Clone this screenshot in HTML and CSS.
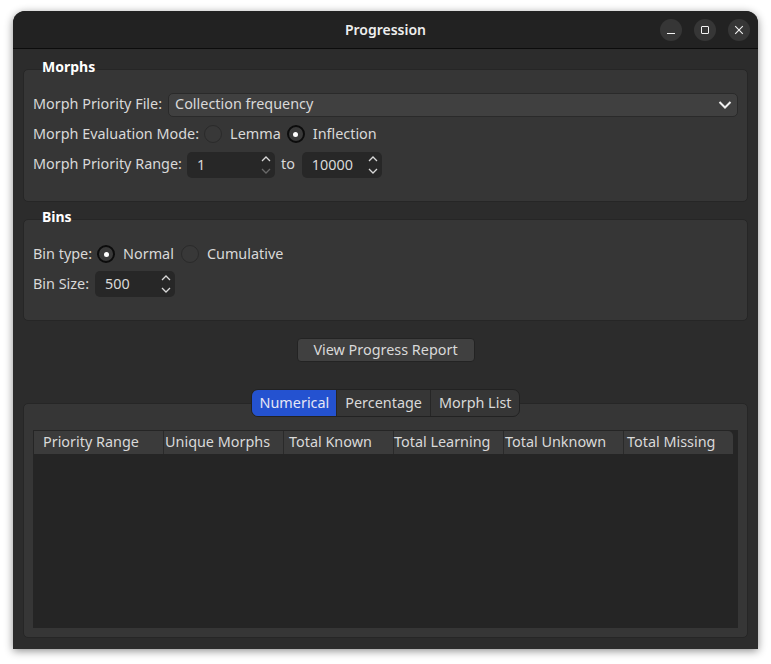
FILE: index.html
```html
<!DOCTYPE html>
<html lang="en">
<head>
    <meta charset="UTF-8" />
    <title>Progression</title>
    <link rel="stylesheet" href="styles.css">
</head>
<body>
    <div class="window">
        <header class="titlebar">
            <span class="title">Progression</span>
            <div class="win-btns">
                <span class="win-btn"><svg width="12" height="12" viewBox="0 0 12 12"><path d="M2 9.500h8" stroke="#f2f2f2" stroke-width="1" fill="none"/></svg></span>
                <span class="win-btn"><svg width="12" height="12" viewBox="0 0 12 12"><rect x="2.500" y="2.500" width="7" height="7" rx="0.500" stroke="#f2f2f2" stroke-width="1" fill="none"/></svg></span>
                <span class="win-btn"><svg width="12" height="12" viewBox="0 0 12 12"><path d="M2.200 2.200l7.600 7.600M9.800 2.200l-7.600 7.600" stroke="#f2f2f2" stroke-width="1.100" fill="none"/></svg></span>
            </div>
        </header>
        <main class="content">
            <section class="group group-morphs">
                <h2 class="group-title">Morphs</h2>
                <div class="row">
                    <label class="lbl lbl-file">Morph Priority File:</label>
                    <div class="combo">
                        <span>Collection frequency</span>
                        <svg width="14" height="10" viewBox="0 0 14 10"><path d="M1.500 2l5.500 5.500L12.500 2" stroke="#f0f0f0" stroke-width="2" fill="none"/></svg>
                    </div>
                </div>
                <div class="row">
                    <label class="lbl">Morph Evaluation Mode:</label>
                    <span class="radio"></span>
                    <span class="opt opt-lemma">Lemma</span>
                    <span class="radio on"></span>
                    <span class="opt">Inflection</span>
                </div>
                <div class="row">
                    <label class="lbl">Morph Priority Range:</label>
                    <div class="spin spin-from">
                        <span>1</span>
                        <svg class="arrows" width="12" height="22" viewBox="0 0 12 22"><path d="M2 7l4-4 4 4" stroke="#d8d8d8" stroke-width="1.300" fill="none"/><path d="M2 15l4 4 4-4" stroke="#6a6a6a" stroke-width="1.300" fill="none"/></svg>
                    </div>
                    <span class="to">to</span>
                    <div class="spin spin-small">
                        <span>10000</span>
                        <svg class="arrows" width="12" height="22" viewBox="0 0 12 22"><path d="M2 7l4-4 4 4" stroke="#d8d8d8" stroke-width="1.300" fill="none"/><path d="M2 15l4 4 4-4" stroke="#d8d8d8" stroke-width="1.300" fill="none"/></svg>
                    </div>
                </div>
            </section>

            <section class="group group-bins">
                <h2 class="group-title">Bins</h2>
                <div class="row">
                    <label class="lbl">Bin type:</label>
                    <span class="radio on"></span>
                    <span class="opt opt-normal">Normal</span>
                    <span class="radio"></span>
                    <span class="opt">Cumulative</span>
                </div>
                <div class="row">
                    <label class="lbl lbl-size">Bin Size:</label>
                    <div class="spin spin-small">
                        <span>500</span>
                        <svg class="arrows" width="12" height="22" viewBox="0 0 12 22"><path d="M2 7l4-4 4 4" stroke="#d8d8d8" stroke-width="1.300" fill="none"/><path d="M2 15l4 4 4-4" stroke="#d8d8d8" stroke-width="1.300" fill="none"/></svg>
                    </div>
                </div>
            </section>

            <div class="report"><button class="btn">View Progress Report</button></div>

            <div class="tabs">
                <span class="tab active">Numerical</span>
                <span class="tab">Percentage</span>
                <span class="tab">Morph List</span>
            </div>
            <section class="panel">
                <div class="table">
                    <div class="thead">
                        <span>Priority Range</span>
                        <span>Unique Morphs</span>
                        <span>Total Known</span>
                        <span>Total Learning</span>
                        <span>Total Unknown</span>
                        <span>Total Missing</span>
                    </div>
                </div>
            </section>
        </main>
    </div>
</body>
</html>
```

FILE: styles.css
```css
html,body{
    margin: 0;
    height: 100%;
    background: #fff;
}
body{
    padding: 11px 13px 0;
    box-sizing: border-box;
    font-family: "Noto Sans", "Open Sans", sans-serif;
    font-size: 14.4px;
    color: #d9d9d9;
    overflow: hidden;
}
.window{
    width: 745px;
    height: 638px;
    background: #2c2c2c;
    border-radius: 12px 12px 0 0;
    box-shadow: 0 2px 9px rgba(0,0,0,.45);
    display: flex;
    flex-direction: column;
}
.titlebar{
    height: 37px;
    flex: none;
    background: #222;
    border-radius: 12px 12px 0 0;
    border-bottom: 1px solid #0c0c0c;
    display: flex;
    align-items: center;
    justify-content: center;
    position: relative;
}
.title{
    font-weight: 600;
    font-size: 14px;
    color: #eee;
}
.win-btns{
    position: absolute;
    right: 8px;
    top: 8px;
    display: flex;
    gap: 12px;
}
.win-btn{
    width: 22px;
    height: 22px;
    border-radius: 50%;
    background: #363636;
    display: flex;
    align-items: center;
    justify-content: center;
}
.content{
    flex: 1;
    display: flex;
    flex-direction: column;
    padding: 20px 10px 11px;
    min-height: 0;
}
.group{
    background: #363636;
    border: 1px solid #262626;
    border-radius: 5px;
    padding: 0 9px;
    box-sizing: border-box;
}
.group-morphs{
    height: 133px;
}
.group-bins{
    height: 102px;
    margin-top: 17px;
}
.group-title{
    margin: -13px 0 12px 9px;
    padding: 0;
    height: 20px;
    line-height: 20px;
    font-size: 14px;
    font-weight: 700;
    color: #fff;
}
.row{
    height: 30px;
    display: flex;
    align-items: center;
}
.lbl,.opt,.to{
    padding-bottom: 2px;
}
.lbl{
    margin-right: 5px;
}
.lbl-file,.lbl-size{
    margin-right: 6px;
}
.combo{
    flex: 1;
    height: 24px;
    margin-top: 2px;
    box-sizing: border-box;
    background: #404040;
    border: 1px solid #2a2a2a;
    border-radius: 5px;
    padding: 0 5px 0 6px;
    display: flex;
    align-items: center;
    justify-content: space-between;
}
.combo span{
    padding-bottom: 3px;
}
.radio{
    width: 18px;
    height: 18px;
    box-sizing: border-box;
    border-radius: 50%;
    border: 1px solid #2a2a2a;
    background: #383838;
    margin-right: 8px;
    flex: none;
    display: flex;
    align-items: center;
    justify-content: center;
}
.radio.on{
    border: 2.500px solid #0c0c0c;
    background: #3a3a3a;
}
.radio.on::after{
    content: "";
    width: 5px;
    height: 5px;
    border-radius: 50%;
    background: #fff;
}
.opt-lemma{
    margin-right: 6px;
}
.opt-normal{
    margin-right: 7px;
}
.spin{
    height: 26px;
    background: #272727;
    border-radius: 5px;
    box-sizing: border-box;
    padding: 0 2px 0 10px;
    display: flex;
    align-items: center;
    justify-content: space-between;
    flex: none;
}
.spin span{
    padding-bottom: 2px;
}
.group-morphs .spin{
    margin-top: 2px;
}
.spin-from{
    width: 88px;
}
.spin-small{
    width: 80px;
}
.arrows{
    display: block;
    margin-right: 1px;
}
.to{
    margin: 0 7px 0 6px;
}
.report{
    margin-top: 17px;
    display: flex;
    justify-content: center;
}
.btn{
    width: 178px;
    height: 24px;
    padding: 0 0 2px;
    font: inherit;
    color: #d9d9d9;
    background: #404040;
    border: 1px solid #232323;
    border-radius: 4px;
}
.tabs{
    margin: 27px auto -14px;
    display: flex;
    height: 28px;
    background: #363636;
    border: 1px solid #222;
    border-radius: 7px;
    box-sizing: border-box;
    position: relative;
    z-index: 1;
    overflow: hidden;
}
.tab{
    padding: 0 8px 2px;
    display: flex;
    align-items: center;
    border-left: 1px solid #262626;
}
.tab:first-child{
    border-left: 0;
    padding-right: 7px;
}
.tab.active{
    background: #2452d0;
    color: #e6e6f5;
}
.panel{
    flex: 1;
    min-height: 0;
    background: #363636;
    border: 1px solid #262626;
    border-radius: 5px;
    padding: 26px 9px 9px;
    display: flex;
}
.table{
    flex: 1;
    background: #252525;
    padding-top: 1px;
}
.thead{
    display: grid;
    grid-template-columns: 129px 120px 110px 110px 120px 110px;
    height: 23px;
    width: 699px;
    margin-left: 1px;
    background: #3b3b3b;
    border-radius: 0 5px 0 0;
}
.thead span{
    display: flex;
    align-items: center;
    padding-bottom: 2px;
    border-left: 1px solid #2a2a2a;
    white-space: nowrap;
}
.thead span:nth-child(1){
    border-left: 0;
    padding-left: 9px;
}
.thead span:nth-child(2){
    padding-left: 1px;
}
.thead span:nth-child(3){
    padding-left: 5px;
}
.thead span:nth-child(4){
    padding-left: 0;
}
.thead span:nth-child(5){
    padding-left: 1px;
}
.thead span:nth-child(6){
    padding-left: 3px;
}
```
